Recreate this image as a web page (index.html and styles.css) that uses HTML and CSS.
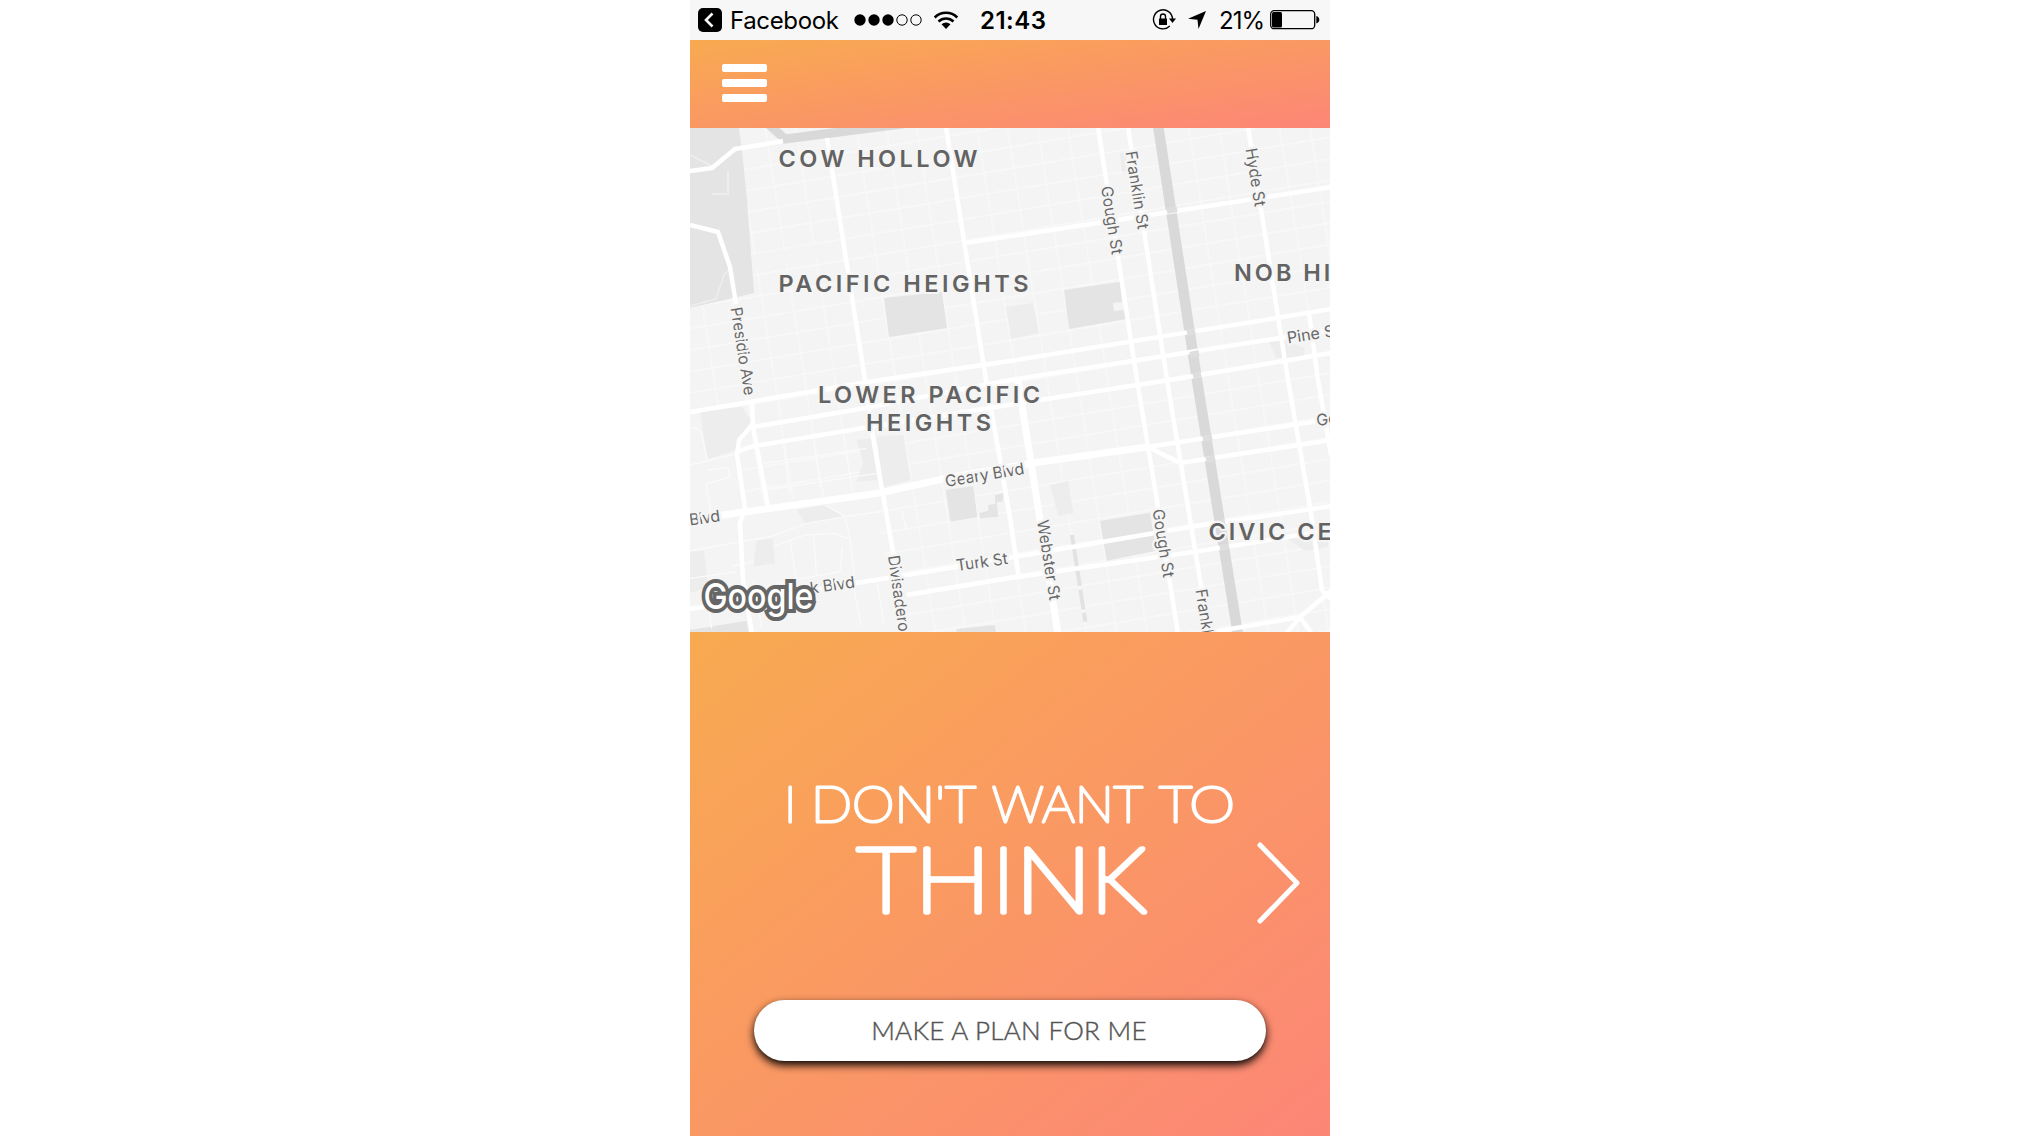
FILE: index.html
```html
<!DOCTYPE html>
<html lang="en">
<head>
<meta charset="utf-8">
<title>Plan</title>
<link rel="stylesheet" href="styles.css">
</head>
<body>
<main class="phone">
  <div class="status">
    <svg class="back" width="24" height="24" viewBox="0 0 24 24"><rect width="24" height="24" rx="5"/><path d="M14.500 5.500L8 12l6.500 6.500" fill="none" stroke="#f7f7f7" stroke-width="2.600"/></svg>
    <span class="app">Facebook</span>
    <svg class="signal" width="70" height="14" viewBox="0 0 70 14"><circle cx="7" cy="7" r="5.700"/><circle cx="21" cy="7" r="5.700"/><circle cx="35" cy="7" r="5.700"/><circle class="ring" cx="49" cy="7" r="5.200"/><circle class="ring" cx="63" cy="7" r="5.200"/></svg>
    <svg class="wifi" width="26" height="20" viewBox="0 0 26 20"><g fill="none" stroke="#000" stroke-width="2.500"><path d="M1.700 7.500a16 16 0 0 1 22.600 0"/><path d="M5.500 11.500a10.600 10.600 0 0 1 15 0"/></g><path d="M8.500 14.300a6.400 6.400 0 0 1 9 0L13 19z"/></svg>
    <time class="clock">21:43</time>
    <svg class="lock" width="25" height="22" viewBox="0 0 25 22"><path d="M17.800 17A9.500 9.500 0 1 1 20.500 10" fill="none" stroke="#000" stroke-width="1.400"/><path d="M17 9.500h7L20.500 14z"/><rect x="7" y="9.500" width="8" height="6.500" rx=".6"/><path d="M8.500 10V7.500a2.500 2.500 0 0 1 5 0V10" fill="none" stroke="#000" stroke-width="1.400"/></svg>
    <svg class="locate" width="18" height="18" viewBox="0 0 18 18"><path d="M18 0L10.500 18L9.500 8.700L0 7.700z"/></svg>
    <span class="percent">21%</span>
    <svg class="battery" width="50" height="20" viewBox="0 0 50 20"><rect x=".7" y=".7" width="44" height="18" rx="3.500" fill="none" stroke="#000" stroke-width="1.300"/><rect x="2" y="2" width="10" height="15.400" rx="1.500"/><path d="M46.300 6q3 1 3 3.700t-3 3.700z"/></svg>
  </div>
  <header class="bar"><button class="menu" aria-label="Menu"><i></i><i></i><i></i></button></header>
  <svg class="map" viewBox="690 128 640 504" width="640" height="504">
    <defs>
      <pattern id="blocks" width="29.500" height="20.900" patternUnits="userSpaceOnUse" patternTransform="matrix(1 -.165 .157 1 1157 122.200)">
        <path d="M0 .7H29.500M.7 0V20.900" stroke="#f9f9f9" stroke-width="1.300"/>
      </pattern>
    </defs>
    <rect x="690" y="128" width="640" height="504" fill="#f4f4f4"/>
    <rect x="690" y="128" width="640" height="504" fill="url(#blocks)"/>
    <path class="land" d="M690 415L747 406L752 425L737 452L744 505L873 492L888 570L893 632H690z"/>
    <path class="land" d="M750 255L820 243L822 258L752 269z"/>

    <!-- parks -->
    <path class="park" d="M690 128H739L743 160L747 200L754 293L690 308z"/>
    <path class="park" d="M884 298L942 292L947 328L889 337z"/>
    <path class="park" d="M1064 290L1120 282L1122 302L1113 303L1114 311L1124 310L1126 319L1069 329z"/>
    <path class="park soft" d="M1006 307L1033 303L1039 333L1011 339z"/>
    <path class="park soft" d="M1120 153L1125 152L1127 172L1122 172z"/>
    <path class="park soft" d="M1269 342L1284 340L1305 348L1303 357L1276 358z"/>
    <g transform="translate(680 380) scale(.33333)">
      <path class="park soft" d="M60 97L185 80L212 120L165 210L82 238z"/>
      <path class="park soft" d="M530 180L575 175L592 300L530 305L550 245z"/>
      <path class="park soft" d="M590 170L670 165L692 300L610 320z"/>
      <path class="park" d="M797 330L880 318L892 412L812 425z"/>
      <path class="park" d="M945 345L970 340L968 365H950L955 410L900 415L898 400L925 392V375L945 372z"/>
      <path class="park soft" d="M350 390L435 375L490 410L375 430z"/>
      <path class="park soft" d="M230 482L278 475L285 550L220 560z"/>
      <path class="park soft" d="M30 515L72 512L85 620L30 640z"/>
      <path class="park" d="M830 747L945 735L948 756H830z"/>
      <path class="park" d="M30 750L200 722L206 756H30z"/>
      <path class="park soft" d="M1110 315L1165 303L1180 400L1135 407z"/>
      <path class="park" d="M1260 423L1410 398L1430 512L1280 542z"/>
      <path d="M1176 465L1216 725" stroke="#e2e2e2" stroke-width="12" stroke-dasharray="30 8 60 6 50 12 60 10" fill="none"/>
      <path class="park soft" d="M1815 470L1940 450L1945 500L1875 512z"/>
      <g class="lane">
        <path d="M30 145Q60 140 65 165L82 238M30 255L165 222M82 270L145 262L150 290L78 312L98 425M30 512L270 470L380 430L495 410L510 475L525 600M280 500L375 465L465 460L510 478M250 250L560 205M255 330L590 280M310 190L330 340M400 175L422 325M490 165L512 300M330 480L350 610M400 465L410 590M290 610L480 575L487 500M435 375L497 410L600 395M155 558L220 545M30 595L170 575M80 640L95 745M220 600L245 745M520 620L545 740M590 600L612 730M620 395L640 515M665 390L680 450"/>
      </g>
    </g>
    <path class="lane faint" d="M690 155L712 166M728 171V194H712M690 306L716 299L724 275L731 268"/>

    <path class="avenue" d="M766 122L785 139L910 123" stroke-width="9"/>
    <path class="avenue" d="M1158 125L1197 380L1238 635" stroke-width="10.500"/>

    <g class="road">
      <path d="M690 171L712 168L735 149L783 141"/>
      <path d="M690 225L718 232L730 267L736 304"/>
      <path d="M827 138L865 380L873 437L893 552L906 632"/>
      <path d="M946 127L986 380L1010 517L1019 578"/>
      <path d="M1098 127L1137 380L1158 507L1178 634"/>
      <path d="M1128 127L1167 380L1209 634"/>
      <path d="M1248 127L1288 380L1310 507L1322 590L1330 599"/>
      <path d="M1309 313L1318 380L1331 455"/>
      <path d="M690 412L880 380L1010 361L1332 309"/>
      <path d="M753 427L860 409L1010 380L1332 330"/>
      <path d="M737 452Q745 448 760 445L863 428L1040 400L1170 380L1332 353"/>
      <path d="M752 400L753 424L739 440L737 455L745 508L740 523L743 580L752 634"/>
      <path d="M753 427L768 507"/>
      <path d="M1148 447L1180 463L1332 440"/>
      <path d="M690 609L789 594L955 567L1190 527L1332 506"/>
      <path d="M907 595L1010 578L1193 552L1332 530"/>
      <path d="M1213 632L1300 617L1332 590M1286 634L1300 617L1312 634"/>
      <path d="M966 243L1332 187"/>
    </g>
    <path class="road wide" d="M1018 380L1040 520L1058 634"/>
    <path class="road wide" d="M690 520L730 514L880 493L947 478L1033 463L1147 447"/>
    <path class="road" d="M1147 447L1332 419"/>
    <path d="M1167 211L1177 209M1187 333L1195 331M1190 355L1199 353M1193 376L1201 374M1203 439L1212 437M1206 460L1215 458M1216 524L1225 522M1220 548L1229 546" fill="none" stroke="#dedede" stroke-width="6"/>

    <g class="street">
      <text transform="translate(730.500 308) rotate(81)" textLength="89">Presidio Ave</text>
      <text transform="translate(1125.500 152) rotate(81)" textLength="79">Franklin St</text>
      <text transform="translate(1101 187) rotate(81)" textLength="69">Gough St</text>
      <text transform="translate(1245.500 149) rotate(81)" textLength="59">Hyde St</text>
      <text transform="translate(888 556) rotate(82)" textLength="77">Divisadero</text>
      <text transform="translate(1037 521) rotate(81)" textLength="81">Webster St</text>
      <text transform="translate(1152.500 510) rotate(81)" textLength="69">Gough St</text>
      <text transform="translate(1195.500 590) rotate(81)" textLength="77">Franklin St</text>
      <text transform="translate(946 487) rotate(-9.500)" textLength="80">Geary Blvd</text>
      <text transform="translate(957 571) rotate(-8)" textLength="52">Turk St</text>
      <text transform="translate(787 597) rotate(-8)" textLength="69">Turk Blvd</text>
      <text transform="translate(690 525.500) rotate(-8)" textLength="31">Blvd</text>
      <text transform="translate(1288 343.500) rotate(-9)">Pine St</text>
      <text transform="translate(1317 426) rotate(-7)">Geary</text>
    </g>
    <g class="area">
      <text x="778.500" y="166.500" textLength="202">COW HOLLOW</text>
      <text x="778.500" y="291.500" textLength="253">PACIFIC HEIGHTS</text>
      <text x="818" y="403" textLength="225">LOWER PACIFIC</text>
      <text x="866" y="431" textLength="128">HEIGHTS</text>
      <text x="1234" y="280.500">NOB HILL</text>
      <text x="1208.500" y="540">CIVIC CENTER</text>
    </g>
    <text class="google" x="703.500" y="609" textLength="110" lengthAdjust="spacingAndGlyphs">Google</text>
  </svg>
  <section class="panel">
    <h1 class="title">
      <svg viewBox="690 771 640 154" width="640" height="154">
        <g class="lead">
          <text x="784" y="822.300">I</text>
          <text x="811" y="822.300" textLength="165" lengthAdjust="spacingAndGlyphs">DON'T</text>
          <text x="992" y="822.300" textLength="151" lengthAdjust="spacingAndGlyphs">WANT</text>
          <text x="1159" y="822.300" textLength="76" lengthAdjust="spacingAndGlyphs">TO</text>
        </g>
        <g class="word">
          <text x="857" y="912" textLength="58" lengthAdjust="spacingAndGlyphs">T</text>
          <text x="914.500" y="912" textLength="76" lengthAdjust="spacingAndGlyphs">H</text>
          <text x="992.500" y="912">I</text>
          <text x="1015.500" y="912" textLength="76" lengthAdjust="spacingAndGlyphs">N</text>
          <text x="1091" y="912">K</text>
        </g>
      </svg>
    </h1>
    <svg class="next" width="46" height="84" viewBox="0 0 46 84"><path d="M4 4L41 42L4 80" fill="none" stroke="#fff" stroke-width="5" stroke-linecap="round" stroke-linejoin="round"/></svg>
    <button class="plan">MAKE A PLAN FOR ME</button>
  </section>
</main>
</body>
</html>
```
FILE: styles.css
```css
* { box-sizing: border-box; }
body { margin: 0; background: #fff; }
.phone {
  width: 640px;
  height: 1136px;
  margin: 0 auto;
  display: flex;
  flex-direction: column;
  overflow: hidden;
  font-family: Inter, "Liberation Sans", sans-serif;
}
.phone svg { display: block; flex: none; }

.status {
  height: 40px;
  flex: none;
  display: flex;
  align-items: center;
  padding-left: 8px;
  background: #f7f7f7;
  color: #000;
  font-size: 24px;
  line-height: 40px;
  white-space: nowrap;
}
.status span, .status time { padding-top: 1px; }
.app { width: 108px; margin-left: 8px; letter-spacing: -.35px; }
.signal { margin-left: 15px; }
.ring { fill: none; stroke: #000; stroke-width: 1; }
.wifi { margin-left: 10px; }
.clock { width: 67px; margin-left: 21px; font-weight: 600; letter-spacing: .5px; }
.lock { margin-left: 105px; }
.locate { margin-left: 11px; }
.percent { width: 44px; margin-left: 13px; letter-spacing: -1px; }
.battery { margin-left: 7px; }

.bar, .panel { background: linear-gradient(to bottom right, #f8aa50, #fc8677); }
.bar { height: 88px; flex: none; padding: 23.500px 32px; }
.menu {
  display: flex;
  flex-direction: column;
  gap: 7px;
  padding: 0;
  border: 0;
  background: none;
}
.menu i { width: 45px; height: 8px; border-radius: 2px; background: #fff; }

.land { fill: #f4f4f4; }
.park { fill: #e4e4e4; }
.park.soft { fill: #ededed; }
.avenue { fill: none; stroke: #d9d9d9; }
.road { fill: none; stroke: #fff; stroke-width: 4.5; stroke-linejoin: round; }
.road.wide { stroke-width: 7; }
.lane { fill: none; stroke: #fafafa; stroke-width: 4; }
.lane.faint { stroke: #efefef; stroke-width: 1.5; }
.street text, .area text {
  paint-order: stroke;
  stroke: #f5f5f5;
  stroke-linejoin: round;
}
.street text { font-size: 16px; fill: #686868; stroke-width: 5px; }
.area text {
  font-size: 23.500px;
  font-weight: 600;
  letter-spacing: 3px;
  fill: #636363;
  stroke-width: 4px;
}
.google {
  font-size: 36px;
  font-weight: 500;
  fill: #fff;
  stroke: #666;
  stroke-width: 8px;
  paint-order: stroke;
}

.panel {
  height: 504px;
  flex: none;
  display: grid;
  grid-template-columns: 64px 512px 64px;
  grid-template-rows: 209px 84px 75px 61px;
  font-family: Lato, sans-serif;
}
.title {
  grid-column: 1 / 4;
  grid-row: 1 / 3;
  margin: 0;
  padding-top: 139px;
}
.title text {
  fill: #fff;
  stroke: #fff;
  stroke-linejoin: round;
  font-weight: 100;
}
.title .lead text { font-size: 50.500px; stroke-width: 3px; }
.title .word text { font-size: 90px; stroke-width: 5.500px; }
.next { grid-column: 3; grid-row: 2; justify-self: end; margin-right: 28px; }
.plan {
  grid-column: 2;
  grid-row: 4;
  border: 0;
  border-radius: 31px;
  background: #fff;
  color: #555;
  font: 300 26px/60px Lato, sans-serif;
  letter-spacing: .3px;
  padding: 0 2px 1px 0;
  -webkit-text-stroke: .45px #555;
  box-shadow: 0 4px 8px #000;
}
```
